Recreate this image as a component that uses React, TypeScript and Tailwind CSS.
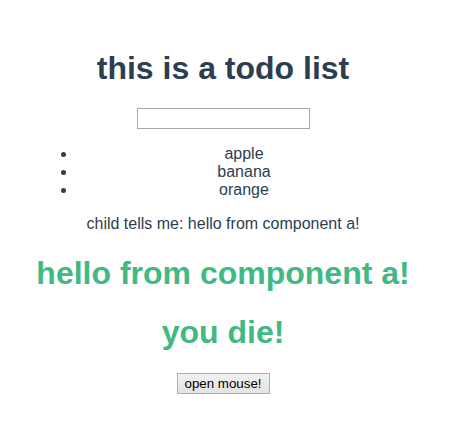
export default function App() {
  const fruits = ["apple", "banana", "orange"];

  return (
    <div className="pt-[50px] pr-2 text-center text-[#2c3e50] font-['Liberation_Sans',Arial,sans-serif]">
      <h1 className="m-0 text-[32px] leading-[37px] font-bold">this is a todo list</h1>
      <input
        type="text"
        className="block mx-auto mt-[21px] w-[173px] h-[21px] border border-[#a9a9a9] bg-white px-[2px] text-[13.33px] outline-none"
      />
      <ul className="mt-[16px] ml-[37px] mr-[35px] pl-[40px] list-disc text-[16px] leading-[18px]">
        {fruits.map((f) => (
          <li key={f}>{f}</li>
        ))}
      </ul>
      <p className="mt-[16px] text-[16px] leading-[18px]">child tells me: hello from component a!</p>
      <h1 className="mt-[22px] text-[32px] leading-[37px] font-bold text-[#42b983]">hello from component a!</h1>
      <h1 className="mt-[22px] text-[32px] leading-[37px] font-bold text-[#42b983]">you die!</h1>
      <button className="mt-[22px] w-[93px] h-[21px] border border-[#adadad] bg-gradient-to-b from-[#f2f2f2] to-[#e3e3e3] text-[13.33px] leading-[15px] text-black">
        open mouse!
      </button>
    </div>
  );
}
